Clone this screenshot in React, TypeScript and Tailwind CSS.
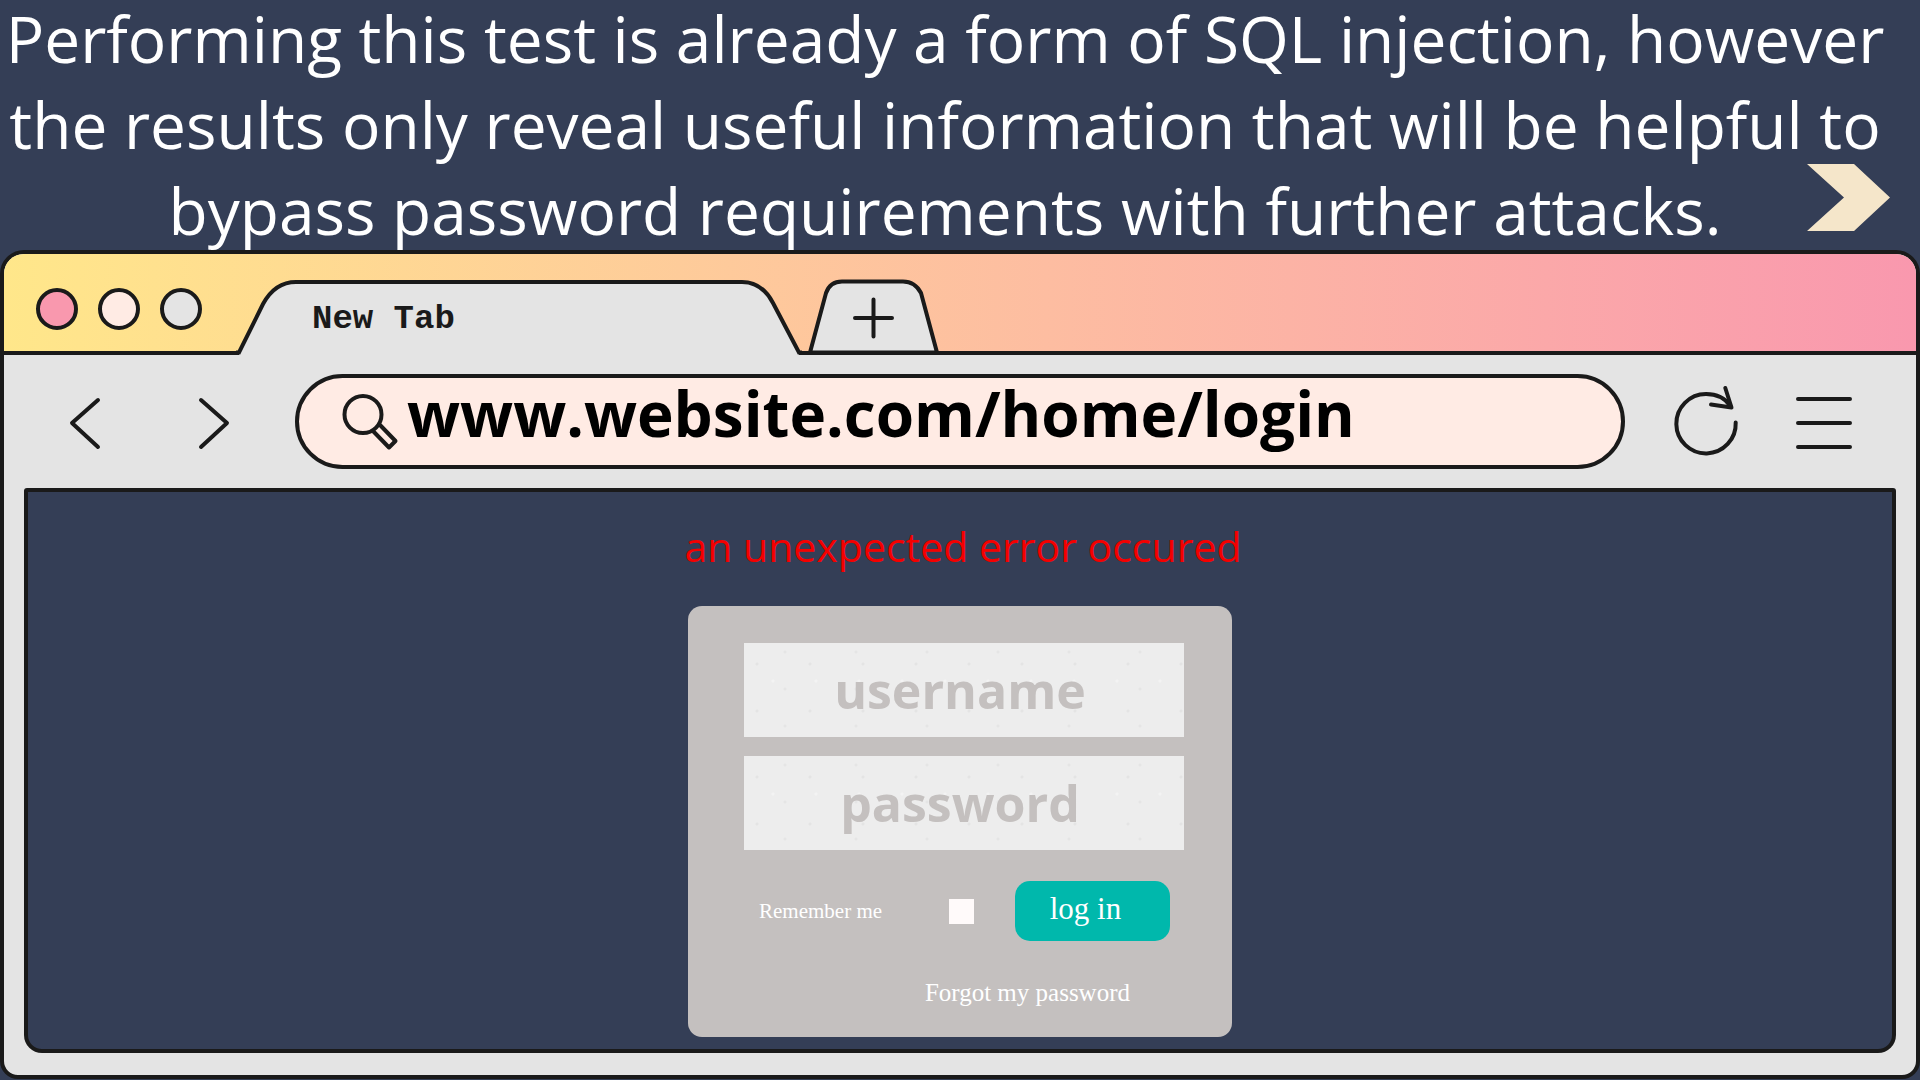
import type { ReactNode } from "react";

const SANS = "font-['Open_Sans',sans-serif]";
const SERIF = "font-['Liberation_Serif',serif]";

function Stroke({ className, viewBox, children }: { className: string; viewBox: string; children: ReactNode }) {
  return (
    <svg
      className={className}
      viewBox={viewBox}
      fill="none"
      stroke="#1a1a1a"
      strokeWidth="4"
      strokeLinecap="round"
      strokeLinejoin="round"
      aria-hidden="true"
    >
      {children}
    </svg>
  );
}

function Banner() {
  return (
    <header className="relative h-[250px] shrink-0 pr-[30px]">
      <p className="-mt-[4px] text-center text-[64px] leading-[86px] text-white">
        Performing this test is already a form of SQL injection, however the results only reveal useful
        information that will be helpful to bypass password requirements with further attacks.
      </p>
      <button type="button" aria-label="Next" className="absolute top-[164px] right-[30px]">
        <svg className="h-[67px] w-[83px]" viewBox="0 0 83 67" fill="#f5e6ca" aria-hidden="true">
          <path d="M0 0H47L83 33.5L47 67H0L37 33.5Z" />
        </svg>
      </button>
    </header>
  );
}

function TabStrip() {
  return (
    <div className="flex h-[101px] shrink-0 items-start border-b-4 border-[#1a1a1a] bg-linear-to-r from-[#ffe78a] to-[#f998ae] pl-8">
      <div className="mt-[34px] flex gap-5">
        <button type="button" aria-label="Close" className="size-[42px] rounded-full border-4 border-[#1a1a1a] bg-[#f998ae]" />
        <button type="button" aria-label="Minimize" className="size-[42px] rounded-full border-4 border-[#1a1a1a] bg-[#ffebe4]" />
        <button type="button" aria-label="Maximize" className="size-[42px] rounded-full border-4 border-[#1a1a1a] bg-[#e4e4e4]" />
      </div>
      <button type="button" className="relative mt-[25px] ml-[34px] h-[76px] w-[566px] shrink-0 text-left">
        <svg className="absolute inset-0 size-full" viewBox="0 0 566 76" aria-hidden="true">
          <path d="M3 73.500L27 25Q39 3 60 3H506Q526 3 537 24L563 73.500V76H3Z" fill="#e4e4e4" />
          <path d="M0 73.500H3L27 25Q39 3 60 3H506Q526 3 537 24L563 73.500H566" fill="none" stroke="#1a1a1a" strokeWidth="4" />
        </svg>
        <span className="relative block pt-1 pl-[76px] font-['Liberation_Mono',monospace] text-[34px] leading-[72px] font-bold text-[#1a1a1a]">
          New Tab
        </span>
      </button>
      <button type="button" aria-label="Open a new tab" className="mt-[25px] ml-1 shrink-0">
        <svg className="h-[76px] w-[135px]" viewBox="0 0 135 76" stroke="#1a1a1a" strokeWidth="4" aria-hidden="true">
          <path d="M4 73.500L20 14Q24 2.500 36 2.500H97Q109 2.500 115 14L131 73.500Z" fill="#e4e4e4" />
          <path d="M49 39H86M67.500 20.500V57.500" strokeLinecap="round" />
        </svg>
      </button>
    </div>
  );
}

function Toolbar() {
  return (
    <div className="flex h-[133px] shrink-0 items-center pr-[61px] pl-[62px]">
      <button type="button" aria-label="Back">
        <Stroke className="h-14 w-10" viewBox="0 0 40 56">
          <path d="M32 6L6 29L32 53" />
        </Stroke>
      </button>
      <button type="button" aria-label="Forward" className="ml-[88px]">
        <Stroke className="h-14 w-10" viewBox="0 0 40 56">
          <path d="M7 6L33 29L7 53" />
        </Stroke>
      </button>
      <label className="ml-[61px] flex h-[95px] min-w-0 flex-1 items-center rounded-full border-4 border-[#1a1a1a] bg-[#ffebe4] pr-10 pl-[42px]">
        <Stroke className="h-[60px] w-[60px] shrink-0" viewBox="0 0 60 60">
          <circle cx="22" cy="22.500" r="18.500" />
          <path d="M32.500 39.500L48 55.500L54.500 49L39 33" />
        </Stroke>
        <input
          type="text"
          aria-label="Address"
          defaultValue="www.website.com/home/login"
          className="ml-[6px] h-[87px] min-w-0 flex-1 bg-transparent pb-4 text-[62px] font-bold text-black outline-none"
        />
      </label>
      <button type="button" aria-label="Reload" className="ml-[47px]">
        <Stroke className="h-[76px] w-[68px]" viewBox="0 0 68 76">
          <path d="M63.700 38.500A29.700 29.700 0 1 1 34 10C44 10 53 14 58.500 22" />
          <path d="M53.300 4L59.500 23.500L39 20.500" />
        </Stroke>
      </button>
      <button type="button" aria-label="Menu" className="ml-[53px]">
        <Stroke className="h-[60px] w-[62px]" viewBox="0 0 62 60">
          <path d="M5 7H57M5 31H57M5 55H57" />
        </Stroke>
      </button>
    </div>
  );
}

function LoginCard() {
  const field =
    "h-[94px] w-full bg-[#ededed] bg-[radial-gradient(circle_at_13px_21px,#e4e4e4_1px,transparent_2px),radial-gradient(circle_at_41px_9px,#e5e5e5_1px,transparent_2px),radial-gradient(circle_at_29px_38px,#f3f3f3_1px,transparent_2px)] bg-[length:53px_47px,71px_37px,43px_61px] pr-2 text-center text-[50px] font-bold text-[#c4c0bf] outline-none placeholder:text-[#c4c0bf] placeholder:opacity-100";
  return (
    <form
      className="mt-[30px] flex w-[544px] flex-col rounded-[14px] bg-[#c4c0bf] pt-[37px] pr-12 pb-7 pl-14"
      onSubmit={(e) => e.preventDefault()}
    >
      <div className="flex flex-col gap-[19px]">
        <input type="text" aria-label="username" placeholder="username" className={field} />
        <input type="password" aria-label="password" placeholder="password" className={field} />
      </div>
      <div className={`mt-[31px] flex h-[60px] items-center pr-[14px] pl-[15px] text-white ${SERIF}`}>
        <label htmlFor="remember" className="pt-[2px] text-[21px]">
          Remember me
        </label>
        <input id="remember" type="checkbox" className="ml-auto size-[25px] appearance-none bg-[#fffafa] checked:bg-[#00b8ac]" />
        <button type="submit" className="ml-[41px] h-[60px] w-[155px] rounded-[15px] bg-[#00b8ac] pr-[14px] pb-1 text-[31px]">
          log in
        </button>
      </div>
      <a href="#forgot" className={`mt-9 mr-[54px] self-end text-[25px] leading-8 text-white ${SERIF}`}>
        Forgot my password
      </a>
    </form>
  );
}

export default function App() {
  return (
    <div className={`flex min-h-screen flex-col bg-[#343e56] pb-px ${SANS}`}>
      <Banner />
      <section className="flex flex-1 flex-col overflow-hidden rounded-t-[24px] rounded-b-[18px] border-4 border-[#1a1a1a] bg-[#e4e4e4]">
        <TabStrip />
        <Toolbar />
        <main className="mx-5 mb-[22px] flex flex-1 flex-col items-center rounded-t-[3px] rounded-b-[18px] border-4 border-[#1a1a1a] bg-[#343e56]">
          <p role="alert" className="mt-6 pl-[6px] text-[41px] leading-[60px] text-[#f40000]">
            an unexpected error occured
          </p>
          <LoginCard />
        </main>
      </section>
    </div>
  );
}
